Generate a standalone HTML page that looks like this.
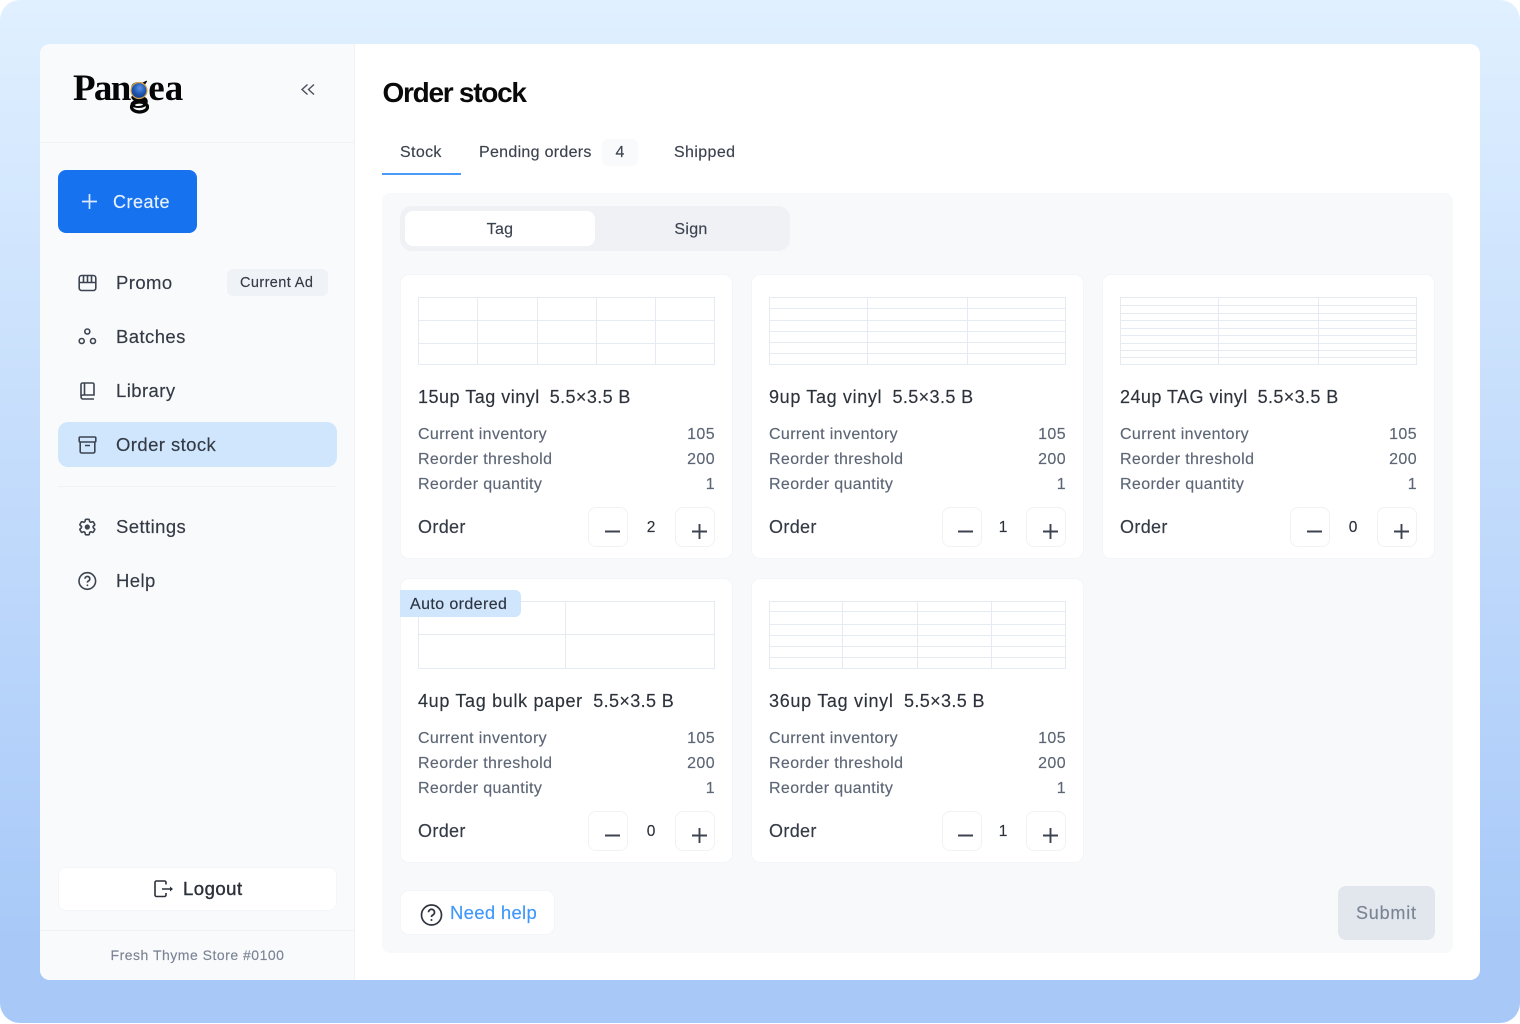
<!DOCTYPE html>
<html lang="en">
<head>
<meta charset="utf-8">
<title>Order stock</title>
<style>
html,body{margin:0;padding:0;width:1520px;height:1024px;overflow:hidden;background:#fff;font-family:"Liberation Sans",Arial,sans-serif}
.a{position:absolute;box-sizing:border-box}
.t{position:absolute;white-space:nowrap;line-height:20px;height:20px;-webkit-text-stroke:.15px currentColor}
.nav{left:116px;font-size:18.500px;letter-spacing:.42px;color:#343a45}
.card{position:absolute;width:332px;height:284px}
.bg{position:absolute;width:331px;height:283px;background:#fff;border-radius:8px;box-shadow:0 0 0 1px #f3f5f8}
.h{left:17px;top:112px;font-size:18px;letter-spacing:.5px;color:#2d323b}
.h span{margin-left:-1px;letter-spacing:.38px}
.k{left:17px;font-size:16px;letter-spacing:.37px;color:#5c6675}
.v{right:18px;font-size:16px;letter-spacing:.4px;color:#5c6675}
.o{left:17px;top:242px;font-size:18px;letter-spacing:.35px;color:#343a45}
.n{width:30px;text-align:center;top:243px;font-size:15.500px;color:#2d323b}
.s{position:absolute;width:40px;height:40px;top:232px;background:#fff;border-radius:8px;box-shadow:inset 0 0 0 1px #f0f2f6}
</style>
</head>
<body>
<div class="a" style="left:0;top:0;width:1520px;height:1023px;border-radius:20px;background:linear-gradient(180deg,#e0f0ff 0%,#d6e9fe 15%,#a8c9f8 92%,#a8c9f8 100%)"></div>
<div class="a" style="left:40px;top:44px;width:1440px;height:936px;background:#fff;border-radius:10px"></div>
<div class="a" style="left:40px;top:44px;width:315px;height:936px;background:#f9fafc;border-right:1px solid #f0f2f5;border-radius:10px 0 0 10px"></div>
<div class="a" style="left:40px;top:142px;width:314px;height:1px;background:#f0f2f5"></div>
<div class="a" style="left:58px;top:170px;width:139px;height:63px;background:#1672ee;border-radius:8px"></div>
<div class="a" style="left:227px;top:269px;width:101px;height:27px;background:#eff2f7;border-radius:6px"></div>
<div class="a" style="left:58px;top:422px;width:279px;height:45px;background:#cfe6fd;border-radius:10px"></div>
<div class="a" style="left:58px;top:486px;width:279px;height:1px;background:#f0f2f6"></div>
<div class="a" style="left:58px;top:867px;width:279px;height:44px;background:#fff;border-radius:8px;box-shadow:inset 0 0 0 1px #f3f5f8"></div>
<div class="a" style="left:40px;top:930px;width:314px;height:1px;background:#f0f2f5"></div>

<div class="a" style="left:382px;top:173px;width:79px;height:2px;background:#4a9bf8"></div>
<div class="a" style="left:602px;top:139px;width:36px;height:27px;background:#f9fafc;border-radius:6px"></div>
<div class="a" style="left:382px;top:193px;width:1071px;height:760px;background:#f8f9fb;border-radius:8px"></div>
<div class="a" style="left:400px;top:206px;width:390px;height:45px;background:#eff1f5;border-radius:12px"></div>
<div class="a" style="left:405px;top:211px;width:190px;height:35px;background:#fff;border-radius:8px"></div>

<div class="bg" style="left:401px;top:275px"></div>
<div class="bg" style="left:752px;top:275px"></div>
<div class="bg" style="left:1103px;top:275px"></div>
<div class="bg" style="left:401px;top:579px"></div>
<div class="bg" style="left:752px;top:579px"></div>

<div class="a" style="left:401px;top:891px;width:153px;height:43px;background:#fff;border-radius:8px;box-shadow:0 0 0 1px #f3f5f8"></div>
<div class="a" style="left:1338px;top:886px;width:97px;height:54px;background:#e2e6ed;border-radius:8px"></div>

<!-- stepper boxes -->
<div class="card" style="left:401px;top:275px"><div class="s" style="left:187px"></div><div class="s" style="left:274px"></div></div>
<div class="card" style="left:752px;top:275px"><div class="s" style="left:190px"></div><div class="s" style="left:274px"></div></div>
<div class="card" style="left:1103px;top:275px"><div class="s" style="left:187px"></div><div class="s" style="left:274px"></div></div>
<div class="card" style="left:401px;top:579px"><div class="s" style="left:187px"></div><div class="s" style="left:274px"></div></div>
<div class="card" style="left:752px;top:579px"><div class="s" style="left:190px"></div><div class="s" style="left:274px"></div></div>

<svg class="a" style="left:0;top:0" width="1520" height="1024" viewBox="0 0 1520 1024" fill="none">
  <!-- thumbnails -->
  <g stroke="#e6eaf2" stroke-width="1">
    <path d="M418.500 297.500h296v67h-296zM477.500 297.500v67M537.500 297.500v67M596.500 297.500v67M655.500 297.500v67M418.500 320.500h296M418.500 343.500h296"/>
    <path d="M769.500 297.500h296v67h-296zM867.500 297.500v67M967.500 297.500v67M769.500 308.500h296M769.500 320.500h296M769.500 331.500h296M769.500 342.500h296M769.500 353.500h296"/>
    <path d="M1120.500 297.500h296v67h-296zM1218.500 297.500v67M1318.500 297.500v67M1120.500 305.500h296M1120.500 313.500h296M1120.500 320.500h296M1120.500 328.500h296M1120.500 335.500h296M1120.500 343.500h296M1120.500 350.500h296M1120.500 357.500h296"/>
    <path d="M418.500 601.500h296v67h-296zM565.500 601.500v67M418.500 634.500h296"/>
    <path d="M769.500 601.500h296v67h-296zM842.500 601.500v67M917.500 601.500v67M991.500 601.500v67M769.500 611.500h296M769.500 624.500h296M769.500 635.500h296M769.500 646.500h296M769.500 657.500h296"/>
  </g>
  <!-- steppers -->
  <g stroke="#3d4451" stroke-width="1.900">
    <path d="M605 531.500h15M692 531.500h15M699.500 524v15"/>
    <path d="M958 531.500h15M1043 531.500h15M1050.500 524v15"/>
    <path d="M1307 531.500h15M1394 531.500h15M1401.500 524v15"/>
    <path d="M605 835.500h15M692 835.500h15M699.500 828v15"/>
    <path d="M958 835.500h15M1043 835.500h15M1050.500 828v15"/>
  </g>
  <!-- chevrons -->
  <path d="M307.500 84.500l-5.500 5 5.500 5M314 84.500l-5.500 5 5.500 5" stroke="#4a505b" stroke-width="1.400"/>
  <!-- create plus -->
  <path d="M89.500 194v15M82 201.500h15" stroke="#dbe9ff" stroke-width="1.700"/>
  <g stroke="#3d4451" stroke-width="1.600">
    <!-- promo -->
    <rect x="79.200" y="275.500" width="16.600" height="15" rx="2.500"/>
    <path d="M79.200 282.500h16.600M83.500 275.500v7M87.500 275.500v7M91.500 275.500v7"/>
    <!-- batches -->
    <circle cx="87.300" cy="331.500" r="2.500"/>
    <circle cx="81.700" cy="341" r="2.500"/>
    <circle cx="93" cy="341" r="2.500"/>
    <!-- library -->
    <path d="M81 396V384.500a1.500 1.500 0 0 1 1.500-1.500h10a1.500 1.500 0 0 1 1.500 1.500V395H83a2 2 0 0 0 0 4h11M84.500 383v12"/>
    <!-- archive -->
    <rect x="79.200" y="437" width="16.600" height="5" rx="1"/>
    <path d="M80.200 442v9.500a1.500 1.500 0 0 0 1.500 1.500h11.600a1.500 1.500 0 0 0 1.500-1.500V442M85 445.500h5"/>
    <!-- settings -->
    <path transform="translate(77 516.700) scale(.86)" stroke-width="1.900" d="M9.594 3.940c.09-.542.56-.94 1.110-.94h2.593c.55 0 1.020.398 1.110.94l.213 1.281c.063.374.313.686.645.870.074.040.147.083.22.127.325.196.72.257 1.075.124l1.217-.456a1.125 1.125 0 0 1 1.370.490l1.296 2.247a1.125 1.125 0 0 1-.26 1.431l-1.003.827c-.293.241-.438.613-.43.992a7.723 7.723 0 0 1 0 .255c-.008.378.137.75.43.991l1.004.827c.424.35.534.955.26 1.430l-1.298 2.247a1.125 1.125 0 0 1-1.369.491l-1.217-.456c-.355-.133-.75-.072-1.076.124a6.470 6.470 0 0 1-.22.128c-.331.183-.581.495-.644.869l-.213 1.281c-.09.543-.56.94-1.110.94h-2.594c-.55 0-1.019-.398-1.110-.94l-.213-1.281c-.062-.374-.312-.686-.644-.87a6.520 6.520 0 0 1-.22-.127c-.325-.196-.72-.257-1.076-.124l-1.217.456a1.125 1.125 0 0 1-1.369-.49l-1.297-2.247a1.125 1.125 0 0 1 .26-1.431l1.004-.827c.292-.24.437-.613.43-.991a6.932 6.932 0 0 1 0-.255c.007-.38-.138-.751-.43-.992l-1.004-.827a1.125 1.125 0 0 1-.26-1.430l1.297-2.247a1.125 1.125 0 0 1 1.370-.491l1.216.456c.356.133.751.072 1.076-.124.072-.044.146-.086.22-.128.332-.183.582-.495.644-.869l.214-1.280Z"/>
    <!-- help -->
    <circle cx="87.300" cy="581" r="8.300"/>
    <path d="M85 578.800a2.400 2.400 0 1 1 3.600 2.100c-.8.4-1.200.9-1.200 1.700"/>
    <!-- large help -->
    <circle cx="431.500" cy="915" r="10" stroke="#2f353f" stroke-width="1.700"/>
    <path d="M428.500 912.300a3 3 0 1 1 4.500 2.600c-1 .5-1.500 1.100-1.500 2.100" stroke="#2f353f" stroke-width="1.700"/>
    <!-- logout -->
    <path d="M166 884.500v-2a1.500 1.500 0 0 0-1.500-1.500h-8a1.500 1.500 0 0 0-1.500 1.500v12.500a1.500 1.500 0 0 0 1.500 1.500h8a1.500 1.500 0 0 0 1.500-1.500v-2M162 889h8" stroke="#2b3039"/>
  </g>
  <circle cx="87.300" cy="527" r="2.600" fill="#3d4451"/>
  <path d="M170 886.500l3 2.500-3 2.500z" fill="#2b3039"/>
  <circle cx="87.400" cy="585.300" r=".9" fill="#3d4451"/>
  <circle cx="431.500" cy="920" r="1" fill="#2f353f"/>
</svg>

<!-- logo -->
<div class="t" style="left:73px;top:71px;height:36px;line-height:36px;font-family:'Liberation Serif',serif;font-weight:700;font-size:37px;color:#060606;-webkit-text-stroke:0"><span style="letter-spacing:-1.700px">Pan</span><span style="letter-spacing:.2px">g</span><span style="letter-spacing:0">ea</span></div>
<svg class="a" style="left:120px;top:76px" width="40" height="42" viewBox="0 0 40 42" fill="none">
  <defs><radialGradient id="b" cx=".55" cy=".35" r=".7"><stop offset="0" stop-color="#5d93e6"/><stop offset=".55" stop-color="#1d55ae"/><stop offset="1" stop-color="#123c86"/></radialGradient></defs>
  <ellipse cx="19.500" cy="31" rx="8" ry="5" stroke="#060606" stroke-width="3.200"/>
  <circle cx="19" cy="14.500" r="8" fill="url(#b)" stroke="#d9a34a" stroke-width="1.200"/>
</svg>

<!-- sidebar text -->
<div class="t" style="left:113px;top:192px;font-size:18px;letter-spacing:.5px;color:#e6f0ff">Create</div>
<div class="t nav" style="top:273px">Promo</div>
<div class="t" style="left:240px;top:273px;font-size:14.500px;letter-spacing:.4px;color:#343a45">Current Ad</div>
<div class="t nav" style="top:327px">Batches</div>
<div class="t nav" style="top:381px">Library</div>
<div class="t nav" style="top:435px">Order stock</div>
<div class="t nav" style="top:517px">Settings</div>
<div class="t nav" style="top:571px">Help</div>
<div class="t" style="left:183px;top:879px;font-size:18.500px;letter-spacing:.5px;color:#2b3039;-webkit-text-stroke:.4px #2b3039">Logout</div>
<div class="t" style="left:58px;width:279px;text-align:center;top:945px;font-size:14px;letter-spacing:.5px;color:#7b8494">Fresh Thyme Store #0100</div>

<!-- header -->
<div class="t" style="left:382.500px;top:78px;height:30px;line-height:30px;font-size:28px;font-weight:700;letter-spacing:-1.270px;color:#0a0a0a;-webkit-text-stroke:0">Order stock</div>
<div class="t" style="left:400px;top:143px;font-size:16px;letter-spacing:.35px;color:#3b424e">Stock</div>
<div class="t" style="left:479px;top:143px;font-size:16px;letter-spacing:.3px;color:#3b424e">Pending orders</div>
<div class="t" style="left:602px;width:36px;text-align:center;top:143px;font-size:16px;color:#3b424e">4</div>
<div class="t" style="left:674px;top:143px;font-size:16px;letter-spacing:.38px;color:#3b424e">Shipped</div>
<div class="t" style="left:405px;width:190px;text-align:center;top:220px;font-size:16px;letter-spacing:.3px;color:#3b424e">Tag</div>
<div class="t" style="left:596px;width:190px;text-align:center;top:220px;font-size:16px;letter-spacing:.3px;color:#3b424e">Sign</div>

<!-- cards -->
<div class="card" style="left:401px;top:275px">
  <div class="t h">15up Tag vinyl&nbsp; <span>5.5×3.5 B</span></div>
  <div class="t k" style="top:150px">Current inventory</div><div class="t v" style="top:150px">105</div>
  <div class="t k" style="top:175px">Reorder threshold</div><div class="t v" style="top:175px">200</div>
  <div class="t k" style="top:200px">Reorder quantity</div><div class="t v" style="top:200px">1</div>
  <div class="t o">Order</div><div class="t n" style="left:235px">2</div>
</div>
<div class="card" style="left:752px;top:275px">
  <div class="t h" style="letter-spacing:.65px">9up Tag vinyl&nbsp; <span>5.5×3.5 B</span></div>
  <div class="t k" style="top:150px">Current inventory</div><div class="t v" style="top:150px">105</div>
  <div class="t k" style="top:175px">Reorder threshold</div><div class="t v" style="top:175px">200</div>
  <div class="t k" style="top:200px">Reorder quantity</div><div class="t v" style="top:200px">1</div>
  <div class="t o">Order</div><div class="t n" style="left:236px">1</div>
</div>
<div class="card" style="left:1103px;top:275px">
  <div class="t h" style="letter-spacing:.45px">24up TAG vinyl&nbsp; <span>5.5×3.5 B</span></div>
  <div class="t k" style="top:150px">Current inventory</div><div class="t v" style="top:150px">105</div>
  <div class="t k" style="top:175px">Reorder threshold</div><div class="t v" style="top:175px">200</div>
  <div class="t k" style="top:200px">Reorder quantity</div><div class="t v" style="top:200px">1</div>
  <div class="t o">Order</div><div class="t n" style="left:235px">0</div>
</div>
<div class="card" style="left:401px;top:579px">
  <div class="t h" style="letter-spacing:.67px">4up Tag bulk paper&nbsp; <span>5.5×3.5 B</span></div>
  <div class="t k" style="top:150px">Current inventory</div><div class="t v" style="top:150px">105</div>
  <div class="t k" style="top:175px">Reorder threshold</div><div class="t v" style="top:175px">200</div>
  <div class="t k" style="top:200px">Reorder quantity</div><div class="t v" style="top:200px">1</div>
  <div class="t o">Order</div><div class="t n" style="left:235px">0</div>
  <div class="a" style="left:-1px;top:11px;width:121px;height:27px;background:#cfe6fd;border-radius:0 6px 6px 0"></div>
  <div class="t" style="left:9px;top:16px;font-size:16px;letter-spacing:.4px;color:#2d3440">Auto ordered</div>
</div>
<div class="card" style="left:752px;top:579px">
  <div class="t h" style="letter-spacing:.7px">36up Tag vinyl&nbsp; <span>5.5×3.5 B</span></div>
  <div class="t k" style="top:150px">Current inventory</div><div class="t v" style="top:150px">105</div>
  <div class="t k" style="top:175px">Reorder threshold</div><div class="t v" style="top:175px">200</div>
  <div class="t k" style="top:200px">Reorder quantity</div><div class="t v" style="top:200px">1</div>
  <div class="t o">Order</div><div class="t n" style="left:236px">1</div>
</div>

<div class="t" style="left:450px;top:903px;font-size:18.500px;letter-spacing:.3px;color:#3f97fb">Need help</div>
<div class="t" style="left:1356px;top:903px;font-size:18px;letter-spacing:.8px;color:#7a8494">Submit</div>
</body>
</html>
